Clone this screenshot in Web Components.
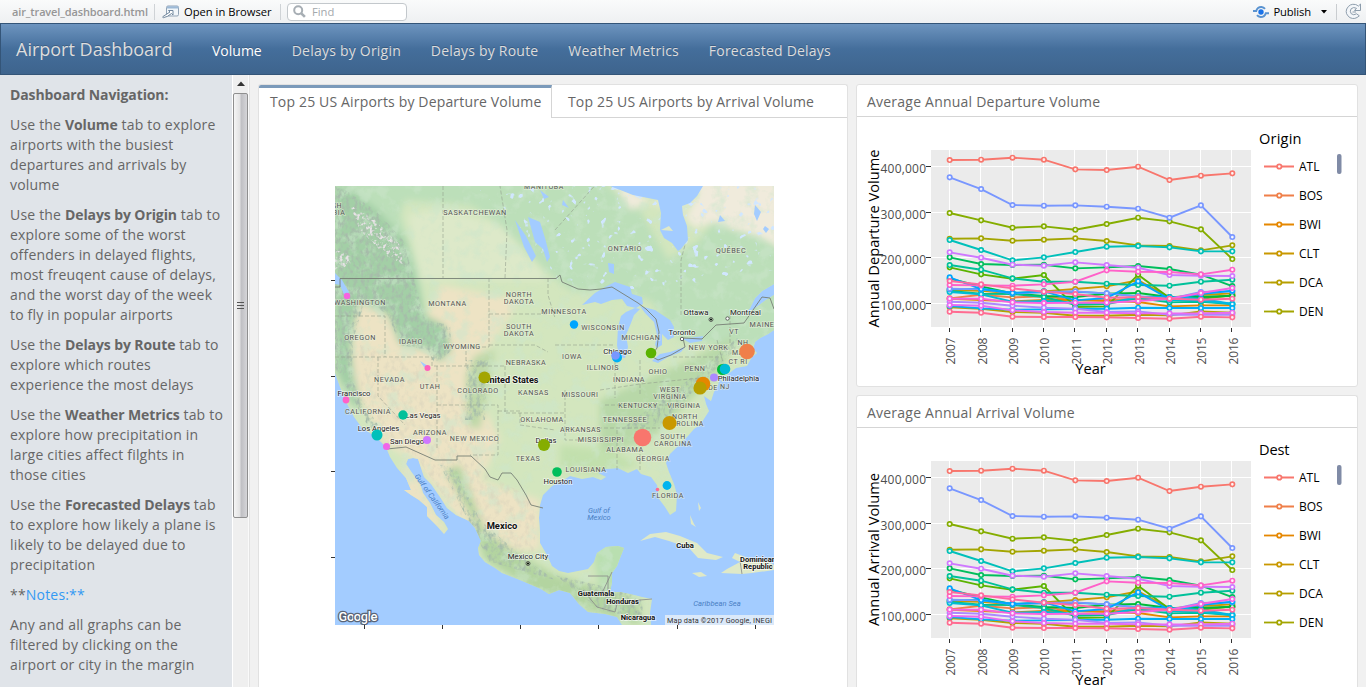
<!DOCTYPE html>
<html lang="en">
<head>
<meta charset="utf-8">
<title>Airport Dashboard</title>
<style>
html,body{margin:0;height:100%;overflow:hidden}
body{font-family:"Open Sans","Noto Sans",sans-serif;font-size:14px;line-height:20px;color:#666;background:#f1f1f1}
</style>
</head>
<body>
<airport-app></airport-app>
<script>
const define = (name, html, setup) => customElements.define(name, class extends HTMLElement {
  connectedCallback() {
    if (this.shadowRoot) return;
    const t = document.createElement('template');
    t.innerHTML = typeof html === 'function' ? html(this) : html;
    this.attachShadow({ mode: 'open' }).append(t.content.cloneNode(true));
    if (setup) setup(this);
  }
});

define('viewer-toolbar', `
<style>
:host{display:flex;flex:none;align-items:center;height:23px;box-sizing:border-box;background:linear-gradient(#fafbfb,#eef0f2);font-size:11.200px;line-height:22px;color:#000;padding-left:12px;white-space:nowrap}
.file{font-weight:600;color:#969696;width:142px;font-size:11px;letter-spacing:-.14px;flex:none}
.sep{width:1px;height:16px;background:#cfd3d6;flex:none}
.open{display:flex;align-items:center;width:125px;box-sizing:border-box;padding-left:7px;flex:none}
.open svg{margin-right:4px}
.find{display:flex;flex:none;align-items:center;box-sizing:border-box;margin-left:6px;width:120px;height:18px;border:1px solid #c3c8cc;border-radius:4px;background:#fff;color:#a3a8ac;padding-left:5px}
.find svg{margin-right:6px}
.grow{flex:1}
.pub{margin:0 10px 0 4px;letter-spacing:-.1px}
.r{margin:0 8px 0 9px}
svg{flex:none}
</style>
<span class="file">air_travel_dashboard.html</span><span class="sep"></span>
<span class="open"><svg width="18" height="14" viewBox="0 0 18 14"><rect x="4.5" y="1" width="12" height="10" rx="1.5" fill="#f1f6fa" stroke="#91a3b5"/><path d="M5 3.5V2q0-.8.8-.8h10q.7 0 .7.8v1.500z" fill="#9db9d6"/><path d="M11 5.500H6.500L8 7 1 11.500q-.8 1 .3 1.200 4-.5 8.200-4.200L11 10z" fill="#fff" stroke="#71879d"/></svg><span>Open in Browser</span></span><span class="sep"></span>
<span class="find"><svg width="13" height="13" viewBox="0 0 13 13"><circle cx="5.200" cy="5.200" r="4" fill="none" stroke="#a7aeb4" stroke-width="2"/><path d="M8.300 8.300l3.600 3.600" stroke="#a7aeb4" stroke-width="2.600"/></svg>Find</span>
<span class="grow"></span>
<svg width="16" height="14" viewBox="0 0 16 14"><circle cx="8" cy="7" r="2.700" fill="#1a73e8"/><path d="M0 6h3.200Q4.500 1.800 8.500 2q2.200.2 3.500 1.800M16 8.200h-3.200Q11.500 12.200 7.500 12q-2.200-.2-3.500-1.800" fill="none" stroke="#5a93d0" stroke-width="2"/></svg>
<span class="pub">Publish</span>
<svg width="6" height="4"><path d="M0 0h6L3 3.500z"/></svg>
<svg class="r" width="1" height="16"><path d="M.5 0v16" stroke="#c9cdd0"/></svg>
<svg width="17" height="17" viewBox="0 0 17 17" style="margin-right:4px"><path d="M15.500 1v6.500H9.500L11.500 5.300Q8.500 3.600 6.200 5.700 4.300 8.200 6.200 10.700 8.600 12.800 11.600 10.800L14.300 12.800Q10 17 5 14.700-.2 11 1.700 6 4.600.2 10.500 1.500 12.300 2 13.300 3.200z" fill="#f3f6f9" stroke="#8d9dac"/><path d="M11 9H7.500" stroke="#8d9dac"/></svg>
`);

define('nav-bar', `
<style>
:host{display:flex;flex:none;align-items:center;box-sizing:border-box;height:52px;border:1px solid #345578;background:linear-gradient(#6d94bf,#446e9b 50%,#3e648d);color:#ddd;text-shadow:0 -1px 0 rgba(0,0,0,.2);padding:2px 0 0 15px;white-space:nowrap}
.brand{font-size:18px;width:181px;position:relative;top:-1px}
nav{display:flex}
</style>
<span class="brand">Airport Dashboard</span><nav><slot></slot></nav>`);

define('nav-link', `
<style>:host{display:block;padding:2px 14.800px 0 15px;font-size:14px;letter-spacing:.22px}:host([active]){color:#fff;letter-spacing:0;padding-right:15px}</style><slot></slot>`);

define('side-note', `
<style>:host{display:block;margin:0 0 10px}</style><slot></slot>`);

define('side-panel', `
<style>
:host{display:flex;height:100%;width:250px;flex:none;box-sizing:border-box;border-right:1px solid #e3e3e3}
.text{width:232px;box-sizing:border-box;background:#e0e4e9;padding:10px 8px 0 10px;overflow:hidden;white-space:nowrap;letter-spacing:.19px;flex:none}
.bar{box-sizing:border-box;border-left:1px solid #fff;border-right:1px solid #fafafa;background:#efefef;padding-top:18px;position:relative;flex:1}
.thumb{height:423px;width:13px;border:1px solid #8f8f8f;border-radius:2px;background:linear-gradient(90deg,#f5f5f5,#e2e2e3 45%,#bfbfc3 55%,#d5d5d8);display:flex;align-items:center;justify-content:center}
.up{position:absolute;left:4px;top:6px;display:block}
</style>
<div class="text"><slot></slot></div>
<div class="bar"><svg class="up" width="8" height="5"><path d="M0 5L4 .5 8 5z" fill="#333"/></svg><div class="thumb"><svg width="7" height="9"><path d="M0 1.500h7M0 4.500h7M0 7.500h7" stroke="#555"/></svg></div></div>`);

define('panel-card', `
<style>
:host{display:flex;flex-direction:column;box-sizing:border-box;border:1px solid #e1e1e1;border-radius:3px;background:#fff;overflow:hidden;min-width:0}
header{display:flex;flex:none;height:32px;box-sizing:border-box;border-bottom:1px solid #d5d5d5;line-height:33px;letter-spacing:.22px}
header ::slotted(span){padding-left:10px}
</style>
<header><slot name="head"></slot></header><slot></slot>`);

define('tab-card', `
<style>
:host{display:flex;flex-direction:column;box-sizing:border-box;border:1px solid #e1e1e1;border-bottom:0;border-radius:3px 3px 0 0;background:#fff;overflow:hidden}
header{display:flex;flex:none;height:33px;letter-spacing:.16px}
.a{width:293px;box-sizing:border-box;border-top:3px solid #7b9aba;border-right:1px solid #d5d5d5;padding-left:11px;line-height:27px}
.b{flex:1;border-bottom:1px solid #d5d5d5;padding-left:16px;line-height:34px}
</style>
<header><div class="a"><slot name="first"></slot></div><div class="b"><slot name="second"></slot></div></header><slot></slot>`);

/* label: x (centre), y (baseline), text, size, kind */
const LABELS = [
 [544,188.500,'MANITOBA',7],[337,208,'SH',7],[339,214.500,'BIA',7],[475,214.500,'SASKATCHEWAN',7.300],[625,250.500,'ONTARIO',7.300],[731,253,'QUÉBEC',7.300],
 [360,304.500,'WASHINGTON',7.200],[447.500,305.500,'MONTANA',7.200],[519,296.500,'NORTH',7.200],[519,303.500,'DAKOTA',7.200],[564,313.500,'MINNESOTA',7.200],
 [360,340,'OREGON',7.200],[411,343.500,'IDAHO',7.200],[462,348.500,'WYOMING',7.200],[519,329,'SOUTH',7.200],[519,336,'DAKOTA',7.200],[603,330,'WISCONSIN',7.200],
 [641,340,'MICHIGAN',7.200],[572,359,'IOWA',7.200],[526,364.500,'NEBRASKA',7.200],[603,370,'ILLINOIS',7.200],[629,381.500,'INDIANA',7.200],[658,374,'OHIO',7.200],
 [389.500,382,'NEVADA',7.200],[430,389,'UTAH',7.200],[478,393,'COLORADO',7.200],[533.500,395,'KANSAS',7.200],[580,396.500,'MISSOURI',7.200],[708.500,349.500,'NEW YORK',7.200],
 [734,333.500,'VT',7],[743,344.500,'NH',7],[738,355,'MA',7],[738,363.500,'CT RI',7],[762,326.500,'MAINE',7.200],[695,371,'PENN',7.200],[713,390,'DE',7],[725,389,'NJ',7],
 [670,391.500,'WEST',7],[670,398.500,'VIRGINIA',7],[638,407.500,'KENTUCKY',7],[684,407.500,'VIRGINIA',7],[368,414,'CALIFORNIA',7.200],[430,435,'ARIZONA',7.200],
 [474.500,441,'NEW MEXICO',7.200],[542,422,'OKLAHOMA',7.200],[528,461,'TEXAS',7.200],[625,422,'TENNESSEE',7.200],[580.500,431.500,'ARKANSAS',7.200],[601,441.500,'MISSISSIPPI',7.200],
 [625,452,'ALABAMA',7.200],[685,419,'NORTH',7],[685,426,'CAROLINA',7],[673,438.500,'SOUTH',7],[673,445.500,'CAROLINA',7],[653,460.500,'GEORGIA',7.200],[586,471.500,'LOUISIANA',7.200],[668,498,'FLORIDA',7.200],
 [354,395.500,'Francisco',7.600,'c'],[423,417.500,'Las Vegas',7.600,'c'],[378.500,431,'Los Angeles',7.600,'c'],[407,444,'San Diego',7.600,'c'],[546,443,'Dallas',7.600,'c'],[558,483.500,'Houston',7.600,'c'],
 [617.500,354,'Chicago',7.800,'c'],[682,335,'Toronto',7.800,'c'],[696,315,'Ottawa',7.800,'c'],[745.500,315,'Montreal',7.800,'c'],[738.500,380.500,'Philadelphia',7.600,'c'],[528,559,'Mexico City',7.800,'c'],
 [511,382.500,'United States',9.100,'b'],[502,529,'Mexico',9.400,'b'],[685,548,'Cuba',7.600,'b'],[596,595.500,'Guatemala',7.500,'b'],[622.500,603.500,'Honduras',7.500,'b'],[638,619.500,'Nicaragua',7.500,'b'],[758,562,'Dominican',7.500,'b'],[758,568.500,'Republic',7.500,'b'],
 [599,513,'Gulf of',7.500,'w'],[599,520,'Mexico',7.500,'w'],[717,606,'Caribbean Sea',7.600,'w']];

/* airport marker: x, y, radius, colour */
const PINS = [[347,296,3.200,'#f763e0'],[427.500,368,3,'#ff62bc'],[484.500,377.500,6,'#a3a500'],[346,400,3.400,'#ff61c9'],[574,324.500,4.200,'#00a5ff'],[617,357.500,5,'#00b0f6'],[615.500,355.500,4.300,'#7997ff'],
 [651,353,5.300,'#5bb300'],[747,351.500,7.800,'#ef7f49'],[722.500,369.500,5.500,'#00ba38'],[725,369,5.300,'#00bcd6'],[714,377.500,4,'#ac88ff'],[703,384,7.300,'#e58700'],[700,388,6.600,'#b79f00'],
 [403,415,4.700,'#00c19a'],[377,435,5.500,'#00c0ba'],[386.500,446.500,3.500,'#f166e8'],[427,440,4,'#cf78ff'],[544,445,6,'#85ad00'],[557,472,4.800,'#00be5c'],[669.500,423,7,'#c99800'],[642.500,437.500,8.800,'#f8766d'],[667,485.500,4.400,'#00b4ef'],[657.500,489.500,1.800,'#ff6c91']];

const LAND = 'M335 186H774V284L762 291 755 298 750 308 745 313 754 309 766 300 774 295V330L768 334 760 338 755 342 753 349 757 353 752 357 747 366 736 368 728 374 722 382 720 377 718 385 714 392 711 401 704 396 706 404 709 411 700 425 694 429 688 436 678 446 670 454 666 463 669 472 674 484 677 495 676 511 670 515 665 507 659 499 657 485 651 477 641 474 637 469 628 473 618 468 603 469 598 473 606 477 601 480 593 477 582 479 570 476 562 481 552 486 543 495 540 505 539 518 540 532 540 543 547 555 552 566 559 571 568 573 578 571 588 569 594 562 597 553 606 547 618 546 624 548 620 558 617 566 612 573 612 582 610 592 620 592 630 594 642 597 652 599 650 613 651 625H622L617 617 605 614 588 612 579 604 570 593 559 590 549 594 541 589 520 580 502 573 495 568 485 562 479 555 478 548 481 541 475 528 469 521 456 515 447 508 440 497 431 484 424 477 418 459 413 458 408 459 406 464 412 473 420 483 423 493 430 503 436 515 444 522 448 529 444 534 437 526 427 516 427 507 419 500 411 495 404 490 411 490 406 478 397 468 390 457 386 447 379 440 373 435 362 428 354 417 346 402 340 387 335 373Z';

define('airport-map', `
<style>
:host{display:block;flex:1;min-height:0}
svg{display:block}
text{font-family:Roboto,sans-serif;text-anchor:middle}
.s{fill:#555;letter-spacing:.55px;stroke:#eef3e0;stroke-width:1.500;stroke-opacity:.55;paint-order:stroke}
.c{fill:#222;stroke:#fff;stroke-width:1.500;stroke-opacity:.6;paint-order:stroke}
.b{fill:#111;font-weight:700;stroke:#fff;stroke-width:1.600;stroke-opacity:.7;paint-order:stroke}
.w{fill:#4a7fc4;font-style:italic}
</style>
<svg width="588" height="569" viewBox="259 118 588 569">
<defs>
<clipPath id="frame"><rect x="335" y="186" width="439" height="439"/></clipPath>
<clipPath id="land"><path d="${LAND}"/></clipPath>
<filter id="soft" x="-20%" y="-20%" width="140%" height="140%"><feGaussianBlur stdDeviation="3.500"/></filter>
<filter id="relief" x="0" y="0" width="100%" height="100%"><feTurbulence type="fractalNoise" baseFrequency=".26 .18" numOctaves="3" seed="4"/><feColorMatrix values="0 0 0 0 .38  0 0 0 0 .5  0 0 0 0 .4  2.8 0 0 0 -1.2"/><feComposite in2="SourceGraphic" operator="in"/></filter>
<filter id="snow" x="0" y="0" width="100%" height="100%"><feTurbulence type="fractalNoise" baseFrequency=".3" numOctaves="2" seed="9"/><feColorMatrix values="0 0 0 0 .8  0 0 0 0 .76  0 0 0 0 .79  5 0 0 0 -2.5"/><feComposite in2="SourceGraphic" operator="in"/></filter>
<filter id="patch" x="0" y="0" width="100%" height="100%"><feTurbulence type="fractalNoise" baseFrequency=".07" numOctaves="4" seed="12"/><feColorMatrix values="0 0 0 0 .6  0 0 0 0 .79  0 0 0 0 .6  4 0 0 0 -1.95"/><feComposite in2="SourceGraphic" operator="in"/></filter>
<filter id="sand" x="0" y="0" width="100%" height="100%"><feTurbulence type="fractalNoise" baseFrequency=".2 .14" numOctaves="3" seed="31"/><feColorMatrix values="0 0 0 0 .68  0 0 0 0 .64  0 0 0 0 .5  3 0 0 0 -1.45"/><feComposite in2="SourceGraphic" operator="in"/></filter>
<filter id="ponds" x="0" y="0" width="100%" height="100%"><feTurbulence type="fractalNoise" baseFrequency=".13" numOctaves="2" seed="21"/><feColorMatrix values="0 0 0 0 .64  0 0 0 0 .8  0 0 0 0 1  14 0 0 0 -9.4"/><feComposite in2="SourceGraphic" operator="in"/></filter>
</defs>
<g clip-path="url(#frame)">
<rect x="335" y="186" width="439" height="439" fill="#a3ccff"/>
<g clip-path="url(#land)">
<rect x="335" y="186" width="439" height="439" fill="#d3e6be"/>
<g filter="url(#soft)">
<path d="M330 180H600L640 210 668 260 700 240 720 210 780 240V345H720L680 340 650 300 570 290 545 270 500 225 470 205 405 200 400 215 420 275 425 320 440 330 420 350 395 300 370 280 355 300 365 330 345 370 335 350Z" fill="#bcdfb9"/>
<path d="M408 215L440 208 500 225 545 275V280H420Z" fill="#dde9c9"/>
<path d="M612 180L660 207V190H700L685 218 695 228 715 222 735 230 755 235 780 248V180H695L680 215 655 200 630 210Z" fill="#f0ebdc"/>
<path d="M360 290L395 290 415 345 440 285 520 300 490 345 470 365 480 400 500 440 480 480 540 500 540 550 500 550 450 510 415 460 385 445 360 400 350 370 355 320Z" fill="#ede3c4"/>
<path d="M405 455L450 540 400 495Z" fill="#ede3c4"/>
<path d="M475 355L495 350 488 390 480 430 466 425 466 375Z" fill="#bfd8a9"/>
<path d="M600 400L690 360 735 335 725 365 690 400 650 440 600 455Z" fill="#b8d8a8"/>
<path d="M445 470L460 465 485 530 520 555 555 575 640 600 640 625 550 600 485 560 470 515Z" fill="#b3d4a0"/>
<path d="M590 540H630V590H600Z" fill="#b9dfb0"/>
<path d="M560 445L610 450 640 465 600 475 560 470Z" fill="#c2e0ad"/>
<path d="M335 186L352 190 378 210 405 240 416 278 425 315 445 325 452 350 440 362 428 350 400 345 388 315 360 302 350 340 354 375 362 410 352 405 335 370Z" fill="#a3cfa6"/>
</g>
<rect x="335" y="186" width="439" height="439" filter="url(#patch)" opacity=".5"/>
<path d="M360 345L425 365 470 400 480 470 535 500 535 555 500 550 450 505 415 455 385 445 362 400Z" filter="url(#sand)" opacity=".55"/>
<path d="M335 186L345 190 375 210 403 240 413 275 425 320 450 325 452 350 435 365 428 350 400 345 388 315 365 300 353 340 352 380 335 370ZM352 380L362 400 378 425 370 430 345 385ZM466 360H488L485 420H465ZM440 465L455 468 480 520 520 555 555 580 490 562 478 540ZM620 430L695 375 740 335 735 350 660 425ZM555 575L640 595 645 620 600 610Z" filter="url(#relief)"/>
<path d="M350 205L375 220 400 245 403 265 385 255 360 230ZM335 250L352 255 350 265 335 270Z" filter="url(#snow)"/>
<path d="M510 186H774V270L650 290 560 285 540 250 480 190Z" filter="url(#ponds)"/>
</g>
<g fill="#a3ccff">
<path d="M610 186L633 195 658 200 661 213 660 230 664 238 672 243 678 251 681 249 688 240 687 226 683 215 682 206 690 203 697 196 703 186Z"/>
<path d="M582 305L595 293 607 286 615 282 624 285 630 287 632 294 642 297 643 304 636 308 627 306 622 299 612 300 601 304 595 302ZM635 308L626 312 621 316 618 327 617 345 619 357 625 358 628 347 626 335 631 323 634 315 640 309ZM640 306L655 310 670 320 674 327 674 337 668 340 662 334 662 345 657 348 655 345 657 335 654 322 645 313ZM652 361L660 354 670 352 685 347 681 352 668 357 658 363ZM683 339L703 336 702 341 690 343Z"/>
<path d="M528 217L540 222 545 238 550 257 547 262 543 249 535 242ZM515 220L526 236 536 256 532 262 524 247ZM608 263L614 264 614 274 609 272ZM335 273L342 280 349 292 345 297 340 285 335 284ZM420 361L428 366 424 367Z"/>
<path d="M540 190l9 7-5 2zM563 200l6 8-7-3zM755 205l6 7-4 9-3-7zM720 215l5 6-7 1zM765 226l4 3-3 4-3-4z"/>
</g>
<g fill="#dfe9c8"><path d="M640 541L650 534 666 532 680 536 697 543 707 553 723 557 716 560 698 558 689 548 669 541 655 537ZM740 562L732 558 735 553 748 558 765 560 774 565V570L752 573 742 574 721 573 727 569ZM692 573L701 572 707 576 699 577ZM690 515l4 9 2 3-5-3zM698 502l3 6-2 3zM661 230l8-4 4 5z" /></g>
<g fill="none" stroke="#909b8b" stroke-width=".7" stroke-dasharray="4 2" opacity=".8">
<path d="M443 186V278M505 278L507 230 500 186M548 278V295L555 318M489 278V347H466V366M489 314H548M489 345H535L548 352M335 316H385V357M335 357H432V366H505M378 357V396L405 425M437 366V450M505 366V413H565M437 405H498V455H470M498 411H520V425L555 430M555 345H615M565 390V440H595M600 390L640 384 700 378M615 355V398M640 360V395M673 357H722M605 405H700M592 428H660M617 430V470M640 430V470M555 230L600 180M681 315V260L685 245M730 315V345M717 340L725 370"/></g>
<path fill="none" stroke="#777f75" stroke-width=".9" d="M335 287H340V279H340V278.500H556L560 275 562 282 578 289 590 290 601 289 612 287 625 295 638 303 646 309 656 319 659 332 657 348 651 356 658 360 671 355 685 347 683 338 702 339 716 325 744 323 753 310 762 297 770 298 774 309M387 449L406 447 435 460H457V456H471L485 469 490 477 498 480 502 473H511L517 480 526 495 531 505 543 508"/>
<path fill="none" stroke="#888" stroke-width=".8" d="M588 576H608V590M612 572L602 593M583 590L597 607 615 612 617 604 640 600 652 599M740 561L742 574"/>
<g fill="none" stroke="#444" stroke-width=".8"><circle cx="711" cy="319.500" r="2"/><circle cx="727.500" cy="318.500" r="1.700" fill="#fff"/><circle cx="682" cy="339" r="1.700" fill="#fff"/><circle cx="528" cy="563.500" r="2"/></g><circle cx="711" cy="319.500" r="1"/><circle cx="528" cy="563.500" r="1"/>
<g id="names"></g>
<text class="w" font-size="7.400" transform="translate(430 498) rotate(54)">Gulf of California</text>
<text x="338.500" y="621" font-size="13" font-weight="500" style="text-anchor:start;fill:#fff;stroke:#596577;stroke-width:2.600;paint-order:stroke" textLength="39">Google</text>
<rect x="665" y="615" width="109" height="10" fill="#e9f0f8" opacity=".8"/><text x="667" y="623" font-size="7.300" fill="#333" style="text-anchor:start" textLength="105">Map data ©2017 Google, INEGI</text>
</g>
<g id="pins"></g>
<path d="M331 280.500H335M331 376.500H335M331 471.500H335M331 557.500H335M364.500 625V629M442.500 625V629M520.500 625V629M598.500 625V629M677.500 625V629M755.500 625V629" stroke="#333"/>
</svg>`, el => {
  const r = el.shadowRoot;
  r.getElementById('names').innerHTML = LABELS.map(([x,y,t,s,k='s']) => `<text class="${k}" x="${x}" y="${y}" font-size="${s}">${t}</text>`).join('');
  r.getElementById('pins').innerHTML = PINS.map(([x,y,q,c]) => `<circle cx="${x}" cy="${y}" r="${q}" fill="${c}"/>`).join('');
});

/* yearly values 2007-2016, in thirds of a pixel down the plot */
const SERIES = [
 ['#f8766d',[244,243,237,243,272,274,264,304,291,284]],
 ['#ef7f49',[659,648,656,653,665,664,660,660,655,652]],
 ['#e58700',[660,664,668,664,664,667,670,683,680,680]],
 ['#c99800',[634,636,644,638,631,623,605,656,649,644]],
 ['#b79f00',[686,690,700,702,711,711,708,710,698,702]],
 ['#a3a500',[480,479,486,483,479,487,500,502,515,500]],
 ['#85ad00',[403,425,447,443,453,436,417,428,452,541]],
 ['#5bb300',[566,587,600,589,685,683,588,658,660,650]],
 ['#00ba38',[600,623,644,652,655,645,643,655,655,651]],
 ['#00be5c',[536,556,559,558,569,566,562,571,588,622]],
 ['#00c08b',[637,645,646,655,678,676,658,671,669,676]],
 ['#00c19a',[559,573,599,609,609,615,619,621,609,603]],
 ['#00c0ba',[484,514,545,536,520,504,502,506,518,518]],
 ['#00bcd6',[640,647,669,667,672,674,655,664,666,676]],
 ['#00b8e5',[632,630,642,641,639,644,653,655,660,676]],
 ['#00b0f6',[682,689,693,692,691,690,687,688,688,688]],
 ['#7997ff',[630,632,644,640,638,644,653,661,640,638]],
 ['#00a5ff',[596,631,643,638,665,658,608,661,646,636]],
 ['#7997ff',[296,331,379,381,380,384,390,417,380,475]],
 ['#ac88ff',[669,672,681,687,690,700,698,708,708,708]],
 ['#cf78ff',[521,537,558,561,551,559,567,589,591,592]],
 ['#e76bf3',[679,681,695,700,702,702,704,704,704,702]],
 ['#f763e0',[660,660,671,673,672,672,667,660,643,628]],
 ['#ff61c9',[619,620,621,617,609,575,579,580,587,573]],
 ['#ff68a1',[607,617,629,639,646,657,655,660,663,660]],
 ['#ff6c91',[699,702,714,715,715,716,718,720,714,716]]];
const LEGEND = [['ATL','#f8766d'],['BOS','#ef7f49'],['BWI','#e58700'],['CLT','#c99800'],['DCA','#b79f00'],['DEN','#a3a500']];

define('volume-chart', el => `
<style>
:host{display:block;flex:1;min-height:0;overflow:hidden}
svg{display:block}
text{font-family:"Open Sans",sans-serif;fill:#000}
.t{fill:#4d4d4d;font-size:12px}
</style>
<svg width="500" height="269" viewBox="857 117 500 269">
<rect x="931" y="150" width="320" height="177" fill="#ebebeb"/>
<g id="grid" stroke="#fff"></g><g id="lines" fill="none"></g><g id="ticks"></g><g id="legend"></g>
<text font-size="14.600" text-anchor="middle" transform="translate(879 ${el.getAttribute('cy')}) rotate(-90)" textLength="${el.getAttribute('len')}">${el.getAttribute('axis')}</text>
<text x="1090.500" y="374" font-size="14.600" text-anchor="middle">Year</text>
<text x="1259" y="144" font-size="14.600" textLength="${el.getAttribute('keylen')}">${el.getAttribute('key')}</text>
<rect x="1337" y="154" width="4.500" height="20" rx="2" fill="#808ba6"/>
</svg>`, el => {
  const g = id => el.shadowRoot.getElementById(id);
  const X = i => 949.7 + 31.4 * i, Y = v => +(119.7 + (v - 123) / 3).toFixed(2);
  const ys = [166.5, 212.5, 257.5, 303.5];
  g('grid').innerHTML = ys.map(y => `<path d="M931 ${y}H1251"/>`).join('') + [...Array(10).keys()].map(i => `<path d="M${Math.round(X(i)) - .5} 150V327"/>`).join('');
  g('lines').innerHTML = SERIES.map(([c, v]) => `<polyline points="${v.map((d, i) => X(i) + ',' + Y(d)).join(' ')}" stroke="${c}" stroke-width="1.900"/>` +
    v.map((d, i) => `<circle cx="${X(i)}" cy="${Y(d)}" r="2.200" fill="#fff" fill-opacity=".85" stroke="${c}" stroke-width="1.700"/>`).join('')).join('');
  g('ticks').innerHTML = ys.map((y, i) => `<path d="M926 ${y}H931" stroke="#333"/><text class="t" x="926" y="${y + 6}" text-anchor="end" textLength="45.500">${4 - i}00,000</text>`).join('') +
    [...Array(10).keys()].map(i => `<path d="M${Math.round(X(i)) - .5} 328V332" stroke="#333"/><text class="t" transform="translate(${X(i) + 5.5} 364.500) rotate(-90)" textLength="27">${2007 + i}</text>`).join('');
  g('legend').innerHTML = LEGEND.map(([n, c], i) => { const y = 166.5 + 29 * i; return `<path d="M1264 ${y}H1294" stroke="${c}" stroke-width="1.800"/><circle cx="1279.300" cy="${y}" r="2.200" fill="#fff" stroke="${c}" stroke-width="1.800"/><text x="1299" y="${y + 4.5}" font-size="12">${n}</text>`; }).join('');
});

define('airport-app', `
<style>
:host{display:flex;flex-direction:column;height:100vh;overflow:hidden}
main{display:flex;flex:1;min-height:0;overflow:hidden}
.content{flex:1;display:flex;gap:8px;padding:9px 8px 0;min-width:0;min-height:0;overflow:hidden}
tab-card{width:590px;flex:none}
.charts{flex:1;display:flex;flex-direction:column;gap:8px;min-height:0}
panel-card{height:303px;flex:none}
panel-card:last-child{height:auto;flex:1;min-height:0;border-bottom:0;border-radius:3px 3px 0 0}
.blue{color:#3399f3}
b{font-weight:700;letter-spacing:-.1px}
</style>
<viewer-toolbar></viewer-toolbar>
<nav-bar><nav-link active>Volume</nav-link><nav-link>Delays by Origin</nav-link><nav-link>Delays by Route</nav-link><nav-link>Weather Metrics</nav-link><nav-link>Forecasted Delays</nav-link></nav-bar>
<main>
<side-panel>
<side-note><b>Dashboard Navigation:</b></side-note>
<side-note>Use the <b>Volume</b> tab to explore<br>airports with the busiest<br>departures and arrivals by<br>volume</side-note>
<side-note>Use the <b>Delays by Origin</b> tab to<br>explore some of the worst<br>offenders in delayed flights,<br>most freuqent cause of delays,<br>and the worst day of the week<br>to fly in popular airports</side-note>
<side-note>Use the <b>Delays by Route</b> tab to<br>explore which routes<br>experience the most delays</side-note>
<side-note>Use the <b>Weather Metrics</b> tab to<br>explore how precipitation in<br>large cities affect filghts in<br>those cities</side-note>
<side-note>Use the <b>Forecasted Delays</b> tab<br>to explore how likely a plane is<br>likely to be delayed due to<br>precipitation</side-note>
<side-note>**<span class="blue">Notes:**</span></side-note>
<side-note>Any and all graphs can be<br>filtered by clicking on the<br>airport or city in the margin</side-note>
</side-panel>
<div class="content">
<tab-card><span slot="first">Top 25 US Airports by Departure Volume</span><span slot="second">Top 25 US Airports by Arrival Volume</span><airport-map></airport-map></tab-card>
<div class="charts">
<panel-card><span slot="head">Average Annual Departure Volume</span><volume-chart axis="Annual Departure Volume" key="Origin" cy="238.500" len="178" keylen="42.500"></volume-chart></panel-card>
<panel-card><span slot="head">Average Annual Arrival Volume</span><volume-chart axis="Annual Arrival Volume" key="Dest" cy="238.500" len="153" keylen="30.500"></volume-chart></panel-card>
</div>
</div>
</main>`);
</script>
</body>
</html>
